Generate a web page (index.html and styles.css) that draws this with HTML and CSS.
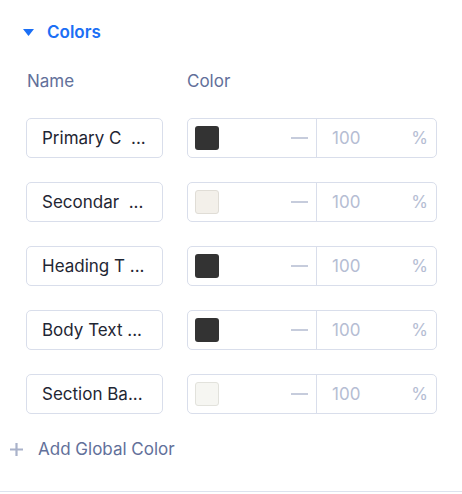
FILE: index.html
```html
<!DOCTYPE html>
<html>
<head>
<meta charset="utf-8">
<link rel="stylesheet" href="styles.css">
</head>
<body>
<div class="panel">
  <div class="section-head">
    <svg class="caret" width="11" height="7" viewBox="0 0 11 7"><path d="M0 0 H11 L5.5 7 Z" fill="#1b6ff5"/></svg>
    <span class="section-title">Colors</span>
  </div>
  <div class="cols">
    <span class="col-name">Name</span>
    <span class="col-color">Color</span>
  </div>
  <div class="rows">
    <div class="row">
      <div class="name-box">Primary C&nbsp;&nbsp;...</div>
      <div class="color-box">
        <div class="swatch-part"><span class="swatch dark"></span><span class="dash"></span></div>
        <div class="pct-part"><span class="num">100</span><span class="pct">%</span></div>
      </div>
    </div>
    <div class="row">
      <div class="name-box">Secondar&nbsp;&nbsp;...</div>
      <div class="color-box">
        <div class="swatch-part"><span class="swatch cream"></span><span class="dash"></span></div>
        <div class="pct-part"><span class="num">100</span><span class="pct">%</span></div>
      </div>
    </div>
    <div class="row">
      <div class="name-box">Heading T&nbsp;...</div>
      <div class="color-box">
        <div class="swatch-part"><span class="swatch dark"></span><span class="dash"></span></div>
        <div class="pct-part"><span class="num">100</span><span class="pct">%</span></div>
      </div>
    </div>
    <div class="row">
      <div class="name-box">Body Text&nbsp;...</div>
      <div class="color-box">
        <div class="swatch-part"><span class="swatch dark"></span><span class="dash"></span></div>
        <div class="pct-part"><span class="num">100</span><span class="pct">%</span></div>
      </div>
    </div>
    <div class="row">
      <div class="name-box">Section Ba...</div>
      <div class="color-box">
        <div class="swatch-part"><span class="swatch offwhite"></span><span class="dash"></span></div>
        <div class="pct-part"><span class="num">100</span><span class="pct">%</span></div>
      </div>
    </div>
  </div>
  <div class="add">
    <svg class="plus" width="13" height="13" viewBox="0 0 13 13"><path d="M6.5 0 V13 M0 6.5 H13" stroke="#a9b2ca" stroke-width="2.2"/></svg>
    <span class="add-text">Add Global Color</span>
  </div>
</div>
</body>
</html>
```
FILE: styles.css
```css
html, body {
  margin: 0;
  padding: 0;
  background: #ffffff;
}
body {
  font-family: Inter, "Noto Sans", sans-serif;
  width: 462px;
  height: 494px;
  overflow: hidden;
}
.panel {
  height: 491px;
  border-bottom: 1px solid #dde2ee;
  box-sizing: content-box;
}
.section-head {
  display: flex;
  align-items: center;
  padding: 22px 0 0 23px;
  height: 20px;
}
.caret {
  display: block;
  margin-top: 1px;
}
.section-title {
  margin-left: 13px;
  font-size: 17px;
  font-weight: 600;
  color: #1b6ff5;
  line-height: 20px;
}
.cols {
  display: flex;
  padding: 29px 0 0 27px;
  height: 20px;
  font-size: 17px;
  color: #62709a;
  line-height: 20px;
}
.col-name {
  width: 160px;
}
.rows {
  display: flex;
  flex-direction: column;
  gap: 24px;
  padding: 27px 0 0 26px;
}
.row {
  display: flex;
  gap: 24px;
  height: 40px;
}
.name-box {
  width: 137px;
  height: 40px;
  box-sizing: border-box;
  border: 1px solid #d9deeb;
  border-radius: 5px;
  padding-left: 15px;
  display: flex;
  align-items: center;
  font-size: 17px;
  color: #1f2633;
  white-space: nowrap;
  overflow: hidden;
}
.color-box {
  width: 250px;
  height: 40px;
  box-sizing: border-box;
  border: 1px solid #d9deeb;
  border-radius: 5px;
  display: flex;
}
.swatch-part {
  width: 129px;
  border-right: 1px solid #d9deeb;
  display: flex;
  align-items: center;
  padding-left: 7px;
  box-sizing: border-box;
}
.swatch {
  width: 24px;
  height: 24px;
  border-radius: 3px;
  box-sizing: border-box;
}
.swatch.dark {
  background: #333333;
}
.swatch.cream {
  background: #f3f0ea;
  border: 1px solid #e0ddd6;
}
.swatch.offwhite {
  background: #f6f6f2;
  border: 1px solid #e2e2dc;
}
.dash {
  width: 17px;
  height: 2px;
  background: #c6ccdc;
  margin-left: 72px;
}
.pct-part {
  flex: 1;
  display: flex;
  align-items: center;
  justify-content: space-between;
  padding: 0 8px 0 15px;
  font-size: 17px;
  color: #b5bdd3;
}
.add {
  display: flex;
  align-items: center;
  padding: 25px 0 0 10px;
  height: 20px;
}
.plus {
  display: block;
}
.add-text {
  margin-left: 15px;
  font-size: 17px;
  color: #62709a;
  line-height: 20px;
}
```
